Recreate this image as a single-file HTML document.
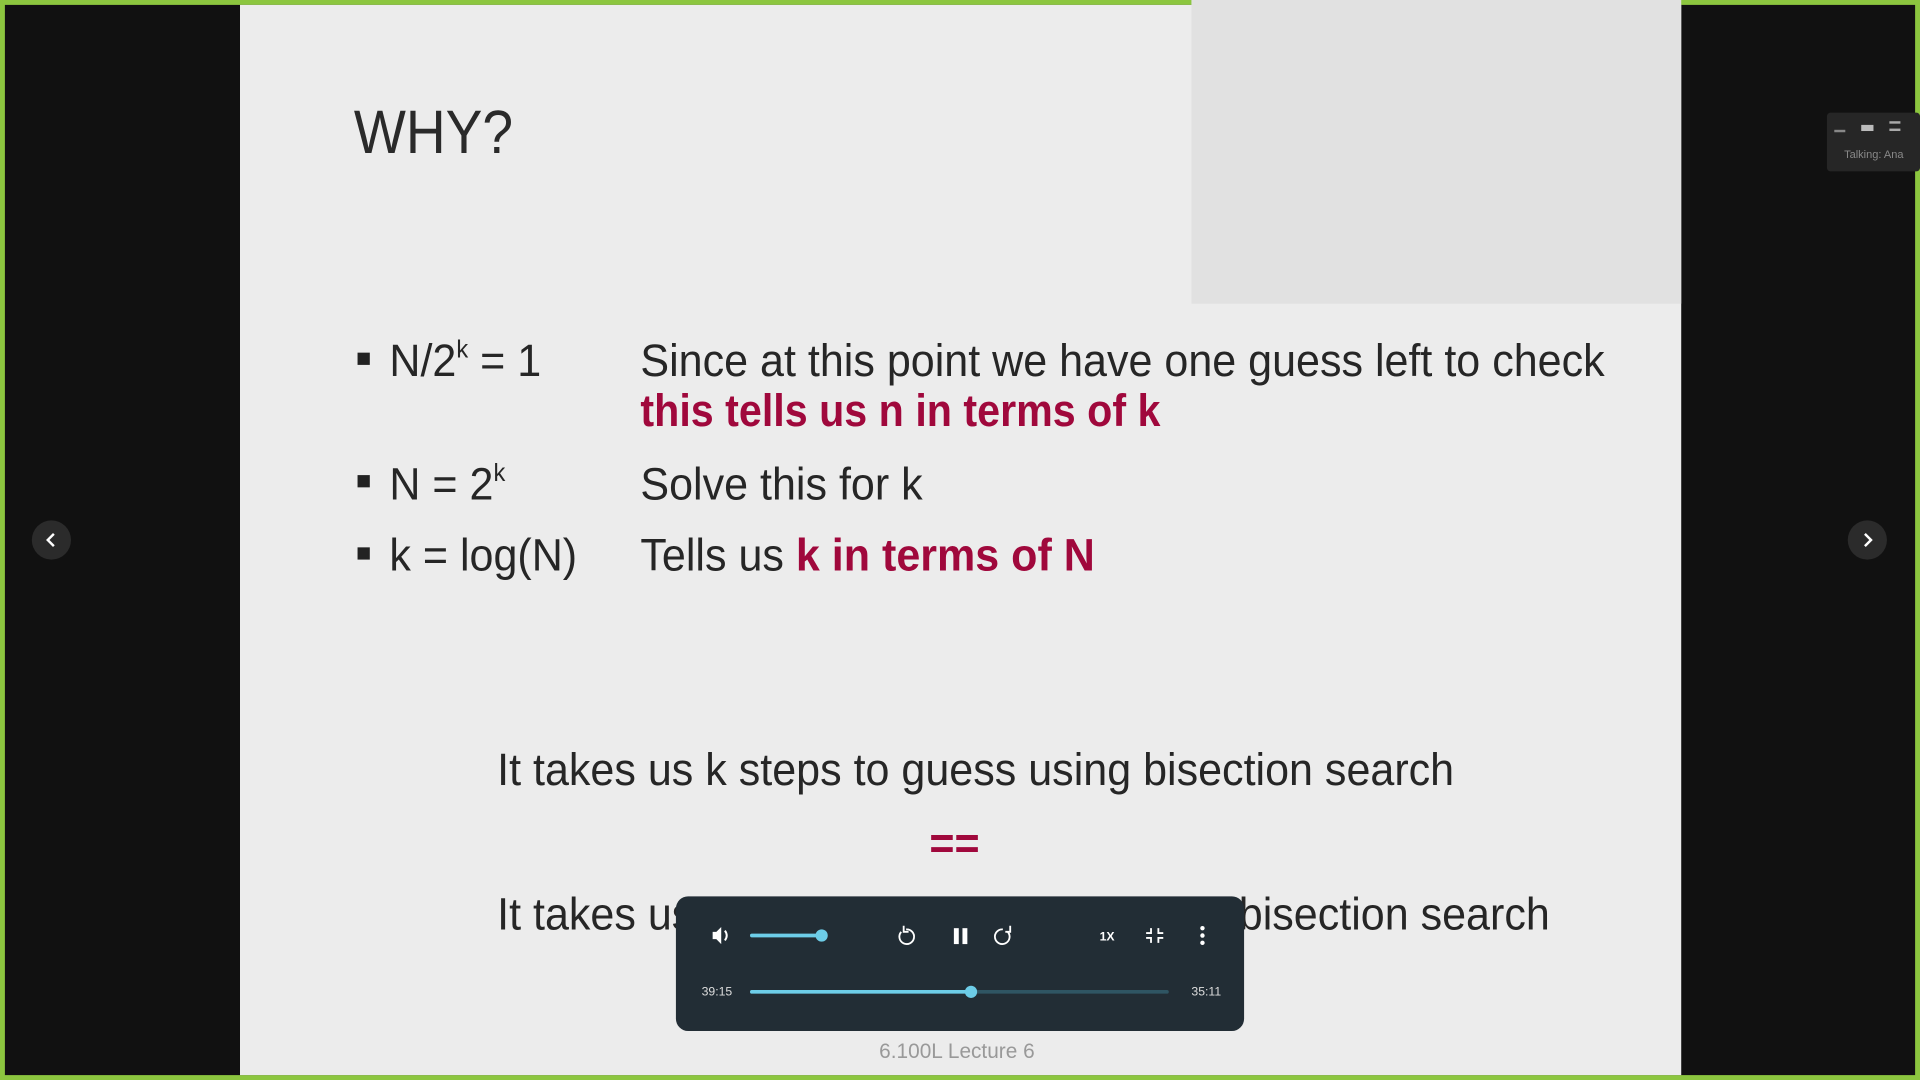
<!DOCTYPE html>
<html><head><meta charset="utf-8"><style>
html,body{margin:0;padding:0;width:1920px;height:1080px;overflow:hidden;background:#111}
#w{position:absolute;left:0;top:0;width:1568px;height:882px;transform:scale(1.22449);transform-origin:0 0;background:#111;font-family:"Liberation Sans",sans-serif}
.a{position:absolute;white-space:nowrap;line-height:1}
.t{font-size:37px;color:#262626;transform:scaleX(0.95);transform-origin:0 0}
.r{color:#a0083c;font-weight:bold}
sup{font-size:0.55em;vertical-align:0;position:relative;top:-0.75em}
.sq{position:absolute;width:10px;height:10px;background:#222}
.nav{position:absolute;width:32px;height:32px;border-radius:50%;background:#2b2b2b}
</style></head><body><div id="w">
<div style="position:absolute;left:0;top:0;width:1568px;height:882px;box-sizing:border-box;border:4px solid #8cc63f"></div>
<div style="position:absolute;left:196px;top:4px;width:1177px;height:874px;background:#ececec"></div>
<div style="position:absolute;left:973px;top:0;width:400px;height:248px;background:#e1e1e1"></div>
<div class="a" style="left:289px;top:83px;font-size:50px;color:#2a2a2a;transform:scaleX(0.9);transform-origin:0 0">WHY?</div>
<div class="sq" style="left:292px;top:288px"></div>
<div class="sq" style="left:292px;top:388px"></div>
<div class="sq" style="left:292px;top:447px"></div>
<div class="a t" style="left:318px;top:276px">N/2<sup>k</sup> = 1</div>
<div class="a t" style="left:523px;top:276px">Since at this point we have one guess left to check</div>
<div class="a t r" style="left:523px;top:317px;transform:scaleX(0.91)">this tells us n in terms of k</div>
<div class="a t" style="left:318px;top:377px">N = 2<sup>k</sup></div>
<div class="a t" style="left:523px;top:377px">Solve this for k</div>
<div class="a t" style="left:318px;top:435px">k = log(N)</div>
<div class="a t" style="left:523px;top:435px">Tells us <span class="r">k in terms of N</span></div>
<div class="a t" style="left:406px;top:610px">It takes us k steps to guess using bisection search</div>
<div class="a t r" style="left:759px;top:670px">==</div>
<div class="a t" style="left:406px;top:728px">It takes us log(N) steps to guess using bisection search</div>
<div class="a" style="left:718px;top:850px;font-size:17px;color:#999">6.100L Lecture 6</div>
<div class="nav" style="left:26px;top:425px"><svg width="32" height="32"><path d="M18 11l-5 5 5 5" stroke="#fff" stroke-width="2" fill="none"/></svg></div>
<div class="nav" style="left:1509px;top:425px"><svg width="32" height="32"><path d="M14 11l5 5-5 5" stroke="#fff" stroke-width="2" fill="none"/></svg></div>
<div style="position:absolute;left:1492px;top:92px;width:76px;height:48px;background:#262626;border-radius:3px">
<div style="position:absolute;left:6px;top:14px;width:9px;height:2px;background:#888"></div>
<div style="position:absolute;left:28px;top:10px;width:10px;height:5px;background:#bbb"></div>
<div style="position:absolute;left:51px;top:7px;width:9px;height:8px;border-top:2px solid #aaa;border-bottom:2px solid #aaa;box-sizing:border-box"></div>
</div>
<div class="a" style="left:1506px;top:122px;font-size:9px;color:#888">Talking: Ana</div>
<div style="position:absolute;left:552px;top:732px;width:464px;height:110px;background:#222d35;border-radius:10px">
<svg width="464" height="110" style="position:absolute;left:0;top:0">
<path d="M30 29h3l4-4v14l-4-4h-3z" fill="#fff"/><path d="M40 28q3 4 0 8" stroke="#fff" stroke-width="1.6" fill="none"/>
<line x1="62" y1="32" x2="119" y2="32" stroke="#6dcde8" stroke-width="3" stroke-linecap="round"/><circle cx="119" cy="32" r="5" fill="#6dcde8"/>
<path d="M188 27a6 6 0 1 1-4 2" stroke="#fff" stroke-width="1.5" fill="none"/><path d="M186 24v5h4" stroke="#fff" stroke-width="1.5" fill="none"/>
<rect x="227" y="26" width="4" height="13" fill="#fff"/><rect x="234" y="26" width="4" height="13" fill="#fff"/>
<path d="M267 27a6 6 0 1 0 4 2" stroke="#fff" stroke-width="1.5" fill="none"/><path d="M273 24v5h-4" stroke="#fff" stroke-width="1.5" fill="none"/>
<text x="346" y="36" fill="#fff" font-size="10" font-family="Liberation Sans" font-weight="bold">1X</text>
<path d="M388 26v4h-4M394 26v4h4M388 38v-4h-4M394 38v-4h4" stroke="#fff" stroke-width="1.5" fill="none"/>
<circle cx="430" cy="26" r="1.8" fill="#fff"/><circle cx="430" cy="32" r="1.8" fill="#fff"/><circle cx="430" cy="38" r="1.8" fill="#fff"/>
<text x="21" y="81" fill="#ddd" font-size="10" font-family="Liberation Sans">39:15</text>
<line x1="62" y1="78" x2="401" y2="78" stroke="#2f5563" stroke-width="3" stroke-linecap="round"/>
<line x1="62" y1="78" x2="241" y2="78" stroke="#6dcde8" stroke-width="3" stroke-linecap="round"/><circle cx="241" cy="78" r="5" fill="#6dcde8"/>
<text x="421" y="81" fill="#ddd" font-size="10" font-family="Liberation Sans">35:11</text>
</svg></div>
</div></body></html>
